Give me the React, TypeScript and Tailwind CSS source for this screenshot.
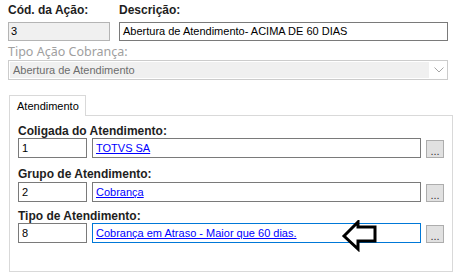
import React from 'react';

const label = "font-['Liberation_Sans',Arial,sans-serif] font-bold text-[12px] text-[#1e1e1e]";
const box = "h-[20px] border border-[#7a7a7a] bg-white flex items-center px-[3px] font-['Liberation_Sans',Arial,sans-serif] text-[11px] text-black whitespace-nowrap overflow-hidden";
const link = "text-[#0000ff] underline";

function DotsButton() {
  return (
    <div className="w-[18px] h-[18px] bg-[#e1e1e1] border border-[#adadad] flex items-end justify-center pb-[2px] font-['Liberation_Sans',Arial,sans-serif] text-[11px] leading-[8px] text-[#333]">
      ...
    </div>
  );
}

function LeftArrow() {
  return (
    <svg width="38" height="32" viewBox="0 0 38 32" className="absolute left-[249px] top-[-3px]">
      <polygon
        points="3,16 17,2 17,7 34,7 34,21 17,21 17,29"
        fill="white"
        stroke="black"
        strokeWidth="3"
        strokeLinejoin="miter"
      />
    </svg>
  );
}

export default function App() {
  return (
    <div className="w-[462px] h-[280px] bg-white px-2 pt-[3px] overflow-hidden">
      {/* top fields */}
      <div className="flex gap-[9px]">
        <div className="w-[102px]">
          <div className={`${label} leading-[14px] h-[19px]`}>Cód. da Ação:</div>
          <div className="h-[19px] border border-[#b4b4b4] bg-[#f0f0f0] flex items-center px-[2px] font-['Liberation_Sans',Arial,sans-serif] text-[11px] text-black">3</div>
        </div>
        <div className="w-[329px]">
          <div className={`${label} leading-[14px] h-[19px]`}>Descrição:</div>
          <div className="h-[19px] border border-[#7a7a7a] bg-white flex items-center px-[3px] font-['Liberation_Sans',Arial,sans-serif] text-[11px] text-black whitespace-nowrap">
            Abertura de Atendimento- ACIMA DE 60 DIAS
          </div>
        </div>
      </div>

      <div className="mt-[3px] h-[16px] leading-[16px] font-['Noto_Sans','Open_Sans',sans-serif] text-[12.5px] text-[#a0a0a0]">
        Tipo Ação Cobrança:
      </div>
      <div className="w-[440px] h-[20px] border border-[#cccccc] bg-white flex items-stretch">
        <div className="w-[419px] m-px bg-[#f0f0f0] flex items-center px-[3px] font-['Liberation_Sans',Arial,sans-serif] text-[11px] text-[#6d6d6d]">
          Abertura de Atendimento
        </div>
        <div className="flex-1 flex items-center justify-center">
          <svg width="10" height="6" viewBox="0 0 10 6">
            <polyline points="0.5,0.5 5,5 9.5,0.5" fill="none" stroke="#a6a6a6" strokeWidth="1" />
          </svg>
        </div>
      </div>

      {/* tab */}
      <div className="mt-[15px] ml-px w-[444px]">
        <div className="w-[77px] h-[21px] border border-b-0 border-[#d9d9d9] bg-white relative z-10 flex items-center pl-[7px] font-['Liberation_Sans',Arial,sans-serif] text-[11px] text-black">
          Atendimento
        </div>
        <div className="-mt-px h-[157px] border border-[#d9d9d9] bg-white pl-[8px] pt-[9px]">
          <div className={`${label} leading-[13px] h-[13px]`}>Coligada do Atendimento:</div>
          <div className="flex items-end gap-[5px]">
            <div className={`${box} w-[69px]`}>1</div>
            <div className={`${box} w-[329px]`}><span className={link}>TOTVS SA</span></div>
            <DotsButton />
          </div>

          <div className={`${label} leading-[13px] h-[14px] mt-[10px]`}>Grupo de Atendimento:</div>
          <div className="flex items-end gap-[5px]">
            <div className={`${box} w-[69px]`}>2</div>
            <div className={`${box} w-[329px]`}><span className={link}>Cobrança</span></div>
            <DotsButton />
          </div>

          <div className={`${label} leading-[13px] h-[13px] mt-[8px]`}>Tipo de Atendimento:</div>
          <div className="flex items-end gap-[5px]">
            <div className={`${box} w-[69px]`}>8</div>
            <div className="relative">
              <div className={`${box} w-[329px] border-[#0078d7]`}>
                <span className={link}>Cobrança em Atraso - Maior que 60 dias.</span>
              </div>
              <LeftArrow />
            </div>
            <DotsButton />
          </div>
        </div>
      </div>
    </div>
  );
}
